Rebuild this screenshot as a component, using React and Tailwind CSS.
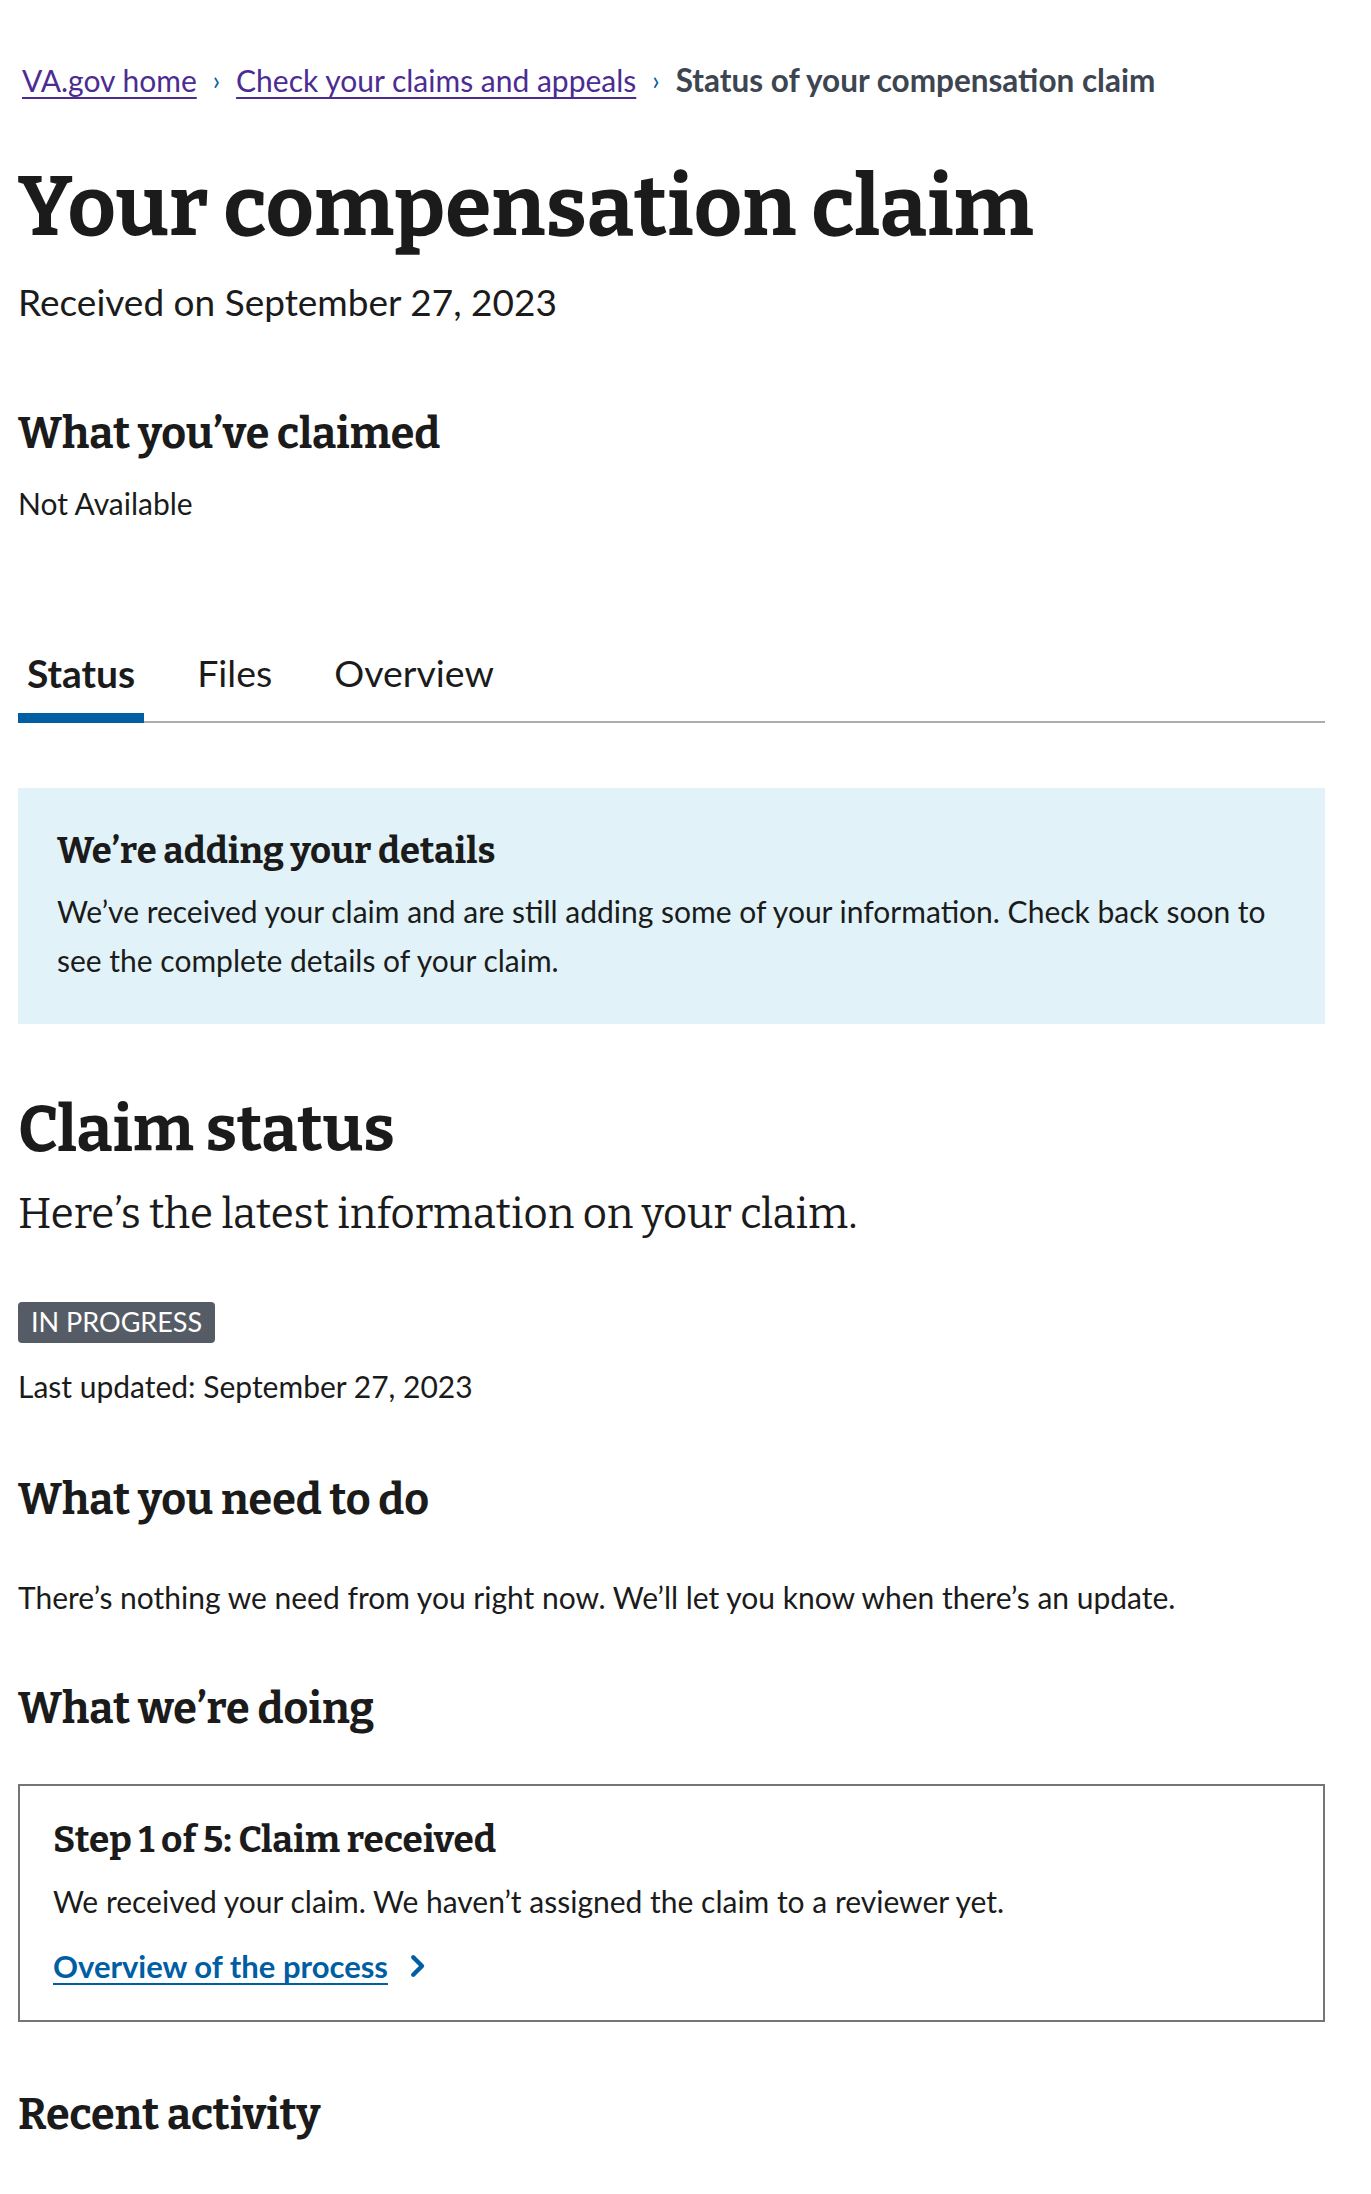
import React from 'react';

const sans = "font-['Source_Sans_Pro','Lato',sans-serif]";
const serif = "font-['Bitter','DejaVu_Serif',serif]";

function Chevron({ className }) {
  return (
    <svg viewBox="0 0 24 24" className={className} fill="none" stroke="currentColor" strokeWidth="3.5" strokeLinecap="round" strokeLinejoin="round">
      <path d="M9 5l7 7-7 7" />
    </svg>
  );
}

export default function App() {
  return (
    <div className={`${sans} bg-white text-[#1b1b1b] pl-[18px] w-[1325px] pb-[80px]`}>
      {/* Breadcrumbs */}
      <nav className="pt-[60px] pl-[4px] flex items-center leading-[40px] text-[30px]">
        <a href="#" className="text-[#4c2c92] underline underline-offset-[5px] decoration-2">VA.gov home</a>
        <span className="text-[#005ea2] text-[26px] mx-[16px]">›</span>
        <a href="#" className="text-[#4c2c92] underline underline-offset-[5px] decoration-2">Check your claims and appeals</a>
        <span className="text-[#005ea2] text-[26px] mx-[16px]">›</span>
        <span className="font-bold text-[#3d4551] text-[31.5px]">Status of your compensation claim</span>
      </nav>

      <h1 className={`${serif} font-bold text-[84px] leading-[96px] mt-[59px]`}>Your compensation claim</h1>
      <p className="text-[37px] leading-[46px] mt-[24px]">Received on September 27, 2023</p>

      <h2 className={`${serif} font-bold text-[43px] leading-[54px] mt-[82px]`}>What you’ve claimed</h2>
      <p className="text-[30px] leading-[40px] mt-[22px]">Not Available</p>

      {/* Tabs */}
      <div className="relative mt-[125px] flex gap-[44px] border-b-2 border-[#a9aeb1] w-[1307px] h-[75px]">
        <div className="relative px-[9px] text-[39px] leading-[50px] font-bold">
          Status
          <div className="absolute left-0 right-0 bottom-[-2px] h-[10px] bg-[#005ea2]" />
        </div>
        <div className="px-[9px] text-[37.5px] leading-[50px]">Files</div>
        <div className="px-[9px] text-[37.5px] leading-[50px]">Overview</div>
      </div>

      {/* Info alert */}
      <div className="mt-[65px] w-[1307px] bg-[#e1f3f8] pl-[39px] pr-[30px] pt-[39px] pb-[39px]">
        <h4 className={`${serif} font-bold text-[36.5px] leading-[48px]`}>We’re adding your details</h4>
        <p className="text-[30px] leading-[49px] mt-[12px]">
          We’ve received your claim and are still adding some of your information. Check back soon to see the complete details of your claim.
        </p>
      </div>

      <h2 className={`${serif} font-bold text-[64px] leading-[70px] mt-[71px]`}>Claim status</h2>
      <p className={`${serif} text-[42px] leading-[54px] mt-[22px]`}>Here’s the latest information on your claim.</p>

      <div className="mt-[61px] inline-flex items-center h-[41px] px-[13px] rounded-[4px] bg-[#565c65] text-white text-[27px]">
        IN PROGRESS
      </div>
      <p className="text-[30px] leading-[40px] mt-[23px]">Last updated: September 27, 2023</p>

      <h3 className={`${serif} font-bold text-[43px] leading-[54px] mt-[67px]`}>What you need to do</h3>
      <p className="text-[30px] leading-[40px] mt-[50px]">
        There’s nothing we need from you right now. We’ll let you know when there’s an update.
      </p>

      <h3 className={`${serif} font-bold text-[43px] leading-[54px] mt-[65px]`}>What we’re doing</h3>

      <div className="mt-[48px] w-[1307px] border-2 border-[#757575] pl-[33px] pt-[30px] pb-[34px]">
        <h4 className={`${serif} font-bold text-[37px] leading-[48px]`}>Step 1 of 5: Claim received</h4>
        <p className="text-[30px] leading-[40px] mt-[17px]">
          We received your claim. We haven’t assigned the claim to a reviewer yet.
        </p>
        <a href="#" className="mt-[25px] flex items-center gap-[14px] text-[#005ea2] font-bold text-[31px] leading-[40px]">
          <span className="underline underline-offset-[5px] decoration-2">Overview of the process</span>
          <Chevron className="w-[30px] h-[30px]" />
        </a>
      </div>

      <h3 className={`${serif} font-bold text-[43px] leading-[54px] mt-[66px]`}>Recent activity</h3>
    </div>
  );
}
